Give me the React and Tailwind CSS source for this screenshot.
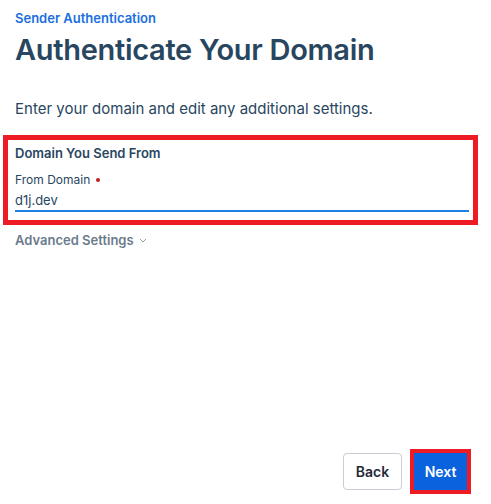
import React from 'react';

export default function App() {
  return (
    <div className="relative flex h-[504px] w-[491px] flex-col bg-white font-['Inter',sans-serif] text-[#294661]">
      <div className="px-[15px] pt-[10px]">
        <div className="text-[13px] font-semibold leading-[16px] text-[#1a6fe0]">Sender Authentication</div>
        <h1 className="mt-[4px] text-[29px] font-semibold leading-[40px] tracking-[-0.3px] text-[#294661]">Authenticate Your Domain</h1>
        <p className="mt-[29px] text-[15px] leading-[20px] text-[#294661]">Enter your domain and edit any additional settings.</p>
      </div>

      <div className="ml-[3px] mr-[13px] mt-[16px] border-[5px] border-[#ed1c24] pb-[8px] pl-[7px] pr-[4px] pt-[4px]">
        <div className="text-[13px] font-semibold leading-[18px] text-[#294661]">Domain You Send From</div>
        <label className="mt-[10px] flex items-center gap-[6px] text-[12px] leading-[16px] text-[#294661]">
          From Domain
          <span className="inline-block h-[4px] w-[4px] rounded-full bg-[#c41a20]" />
        </label>
        <input
          className="mt-[3px] block w-full border-b-2 border-[#1a82e2] bg-transparent pb-[1px] text-[13px] leading-[18px] text-[#294661] outline-none"
          defaultValue="d1j.dev"
        />
      </div>

      <div className="mt-[6px] flex items-center gap-[5px] px-[15px] text-[13px] font-semibold leading-[18px] text-[#6b7b8c]">
        Advanced Settings
        <svg width="8" height="5" viewBox="0 0 8 5" fill="none" stroke="#8a98a8" strokeWidth="1">
          <path d="M1 1l3 3 3-3" />
        </svg>
      </div>

      <div className="mt-auto flex justify-end gap-[8px] pb-[10px] pr-[20px]">
        <button className="mt-[4px] h-[37px] w-[59px] rounded-[4px] border border-[#c8cdd6] bg-white text-[14px] font-semibold text-[#1f2937]">
          Back
        </button>
        <div className="border-[4px] border-[#ed1c24]">
          <button className="h-[37px] w-[53px] bg-[#0b62dd] text-[14px] font-semibold text-white">Next</button>
        </div>
      </div>
    </div>
  );
}
